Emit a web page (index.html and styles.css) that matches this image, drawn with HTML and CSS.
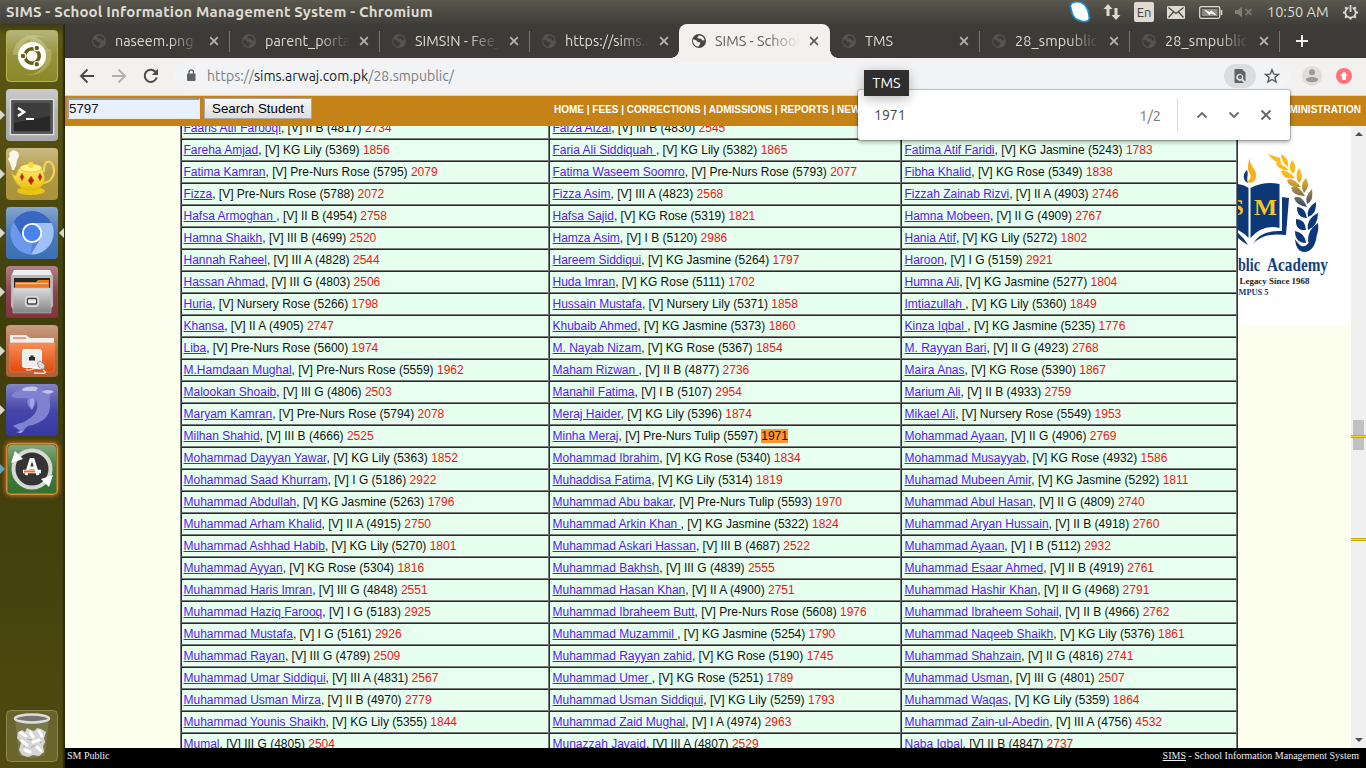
FILE: index.html
```html
<!DOCTYPE html>
<html lang="en">
<head>
<meta charset="utf-8">
<title>SIMS - School Information Management System</title>
<link rel="stylesheet" href="styles.css">
</head>
<body>
<svg class="defs" width="0" height="0">
  <defs>
    <symbol id="globe" viewBox="0 0 14 14"><circle cx="7" cy="7" r="7" fill="currentColor"/><path d="M1.3 5.2 L4.2 6.2 L5.8 8.1 L8.2 8.2 L8.1 10 L6.3 12.7 A5.8 5.8 0 0 1 1.3 5.2Z M7 1.4 L5.2 3.2 L6.4 4.6 L9.2 4.8 L10.2 6.4 L12.6 6.2 A5.8 5.8 0 0 0 7 1.4Z" fill="var(--cut)"/></symbol>
    <symbol id="cross" viewBox="0 0 10 10"><path d="M1.2 1.2L8.8 8.8M8.8 1.2L1.2 8.8" stroke="currentColor" stroke-width="1.7" fill="none"/></symbol>
    <linearGradient id="gloss" x2="0" y2="1"><stop offset="0" stop-color="#fff" stop-opacity=".38"/><stop offset=".5" stop-color="#fff" stop-opacity=".08"/><stop offset="1" stop-color="#fff" stop-opacity="0"/></linearGradient>
    <linearGradient id="metal" x2="0" y2="1"><stop offset="0" stop-color="#dcdcdc"/><stop offset="1" stop-color="#858585"/></linearGradient>
    <linearGradient id="orange" x2="0" y2="1"><stop offset="0" stop-color="#f58e58"/><stop offset="1" stop-color="#e3480c"/></linearGradient>
    <linearGradient id="gold" x2="0" y2="1"><stop offset="0" stop-color="#fff17a"/><stop offset="1" stop-color="#e9bd08"/></linearGradient>
    <linearGradient id="wheat" gradientUnits="userSpaceOnUse" x1="0" y1="176" x2="0" y2="212"><stop offset="0" stop-color="#fbb91c"/><stop offset="1" stop-color="#123c7c"/></linearGradient>
  </defs>
</svg>

<header class="titlebar">
  <span class="window-title">SIMS - School Information Management System - Chromium</span>
  <div class="indicators">
    <svg class="i-skype" width="22" height="22" viewBox="0 0 22 22"><path d="M4 1.500C8 0 13 1 16 4L19 9L20.500 17C20 21 16 21 12 20C7 19 4 16 3 12L1.500 6C1 3 2 2 4 1.500Z" fill="#fff" stroke="#1989c7" stroke-width="1.800"/></svg>
    <svg class="i-net" width="18" height="18" viewBox="0 0 18 18"><path d="M5 1L9.500 6H6.500V13H3.500V6H.5Z M13 17L17.500 12H14.500V5H11.500V12H8.500Z" fill="#dfdbd2"/></svg>
    <span class="lang">En</span>
    <svg class="i-mail" width="18" height="13" viewBox="0 0 18 13"><rect width="18" height="13" rx="1" fill="#dfdbd2"/><path d="M1.500 1.500L9 7.500L16.500 1.500M1.500 11.500L6.500 6M16.500 11.500L11.500 6" stroke="#45433e" stroke-width="1.200" fill="none"/></svg>
    <svg class="i-battery" width="24" height="13" viewBox="0 0 24 13"><rect x=".7" y=".7" width="20" height="11.600" rx="1.500" fill="none" stroke="#dfdbd2" stroke-width="1.300"/><rect x="3" y="3" width="15.500" height="7" fill="#8b8880"/><path d="M22.500 4V9" stroke="#dfdbd2" stroke-width="1.500"/><path d="M5 3.500L11 6L12 4L18 9.500L11.500 7.500L10.500 9.500Z" fill="#fff"/></svg>
    <svg class="i-sound" width="18" height="12" viewBox="0 0 18 12"><path d="M0 4H3L7 .5V11.500L3 8H0Z" fill="#827f77"/><path d="M10.500 3L16.500 9M16.500 3L10.500 9" stroke="#827f77" stroke-width="1.600"/></svg>
    <span class="clock">10:50 AM</span>
    <svg class="i-gear" width="17" height="17" viewBox="0 0 17 17"><g stroke="#dfdbd2" fill="none"><circle cx="8.500" cy="8.500" r="5.200" stroke-width="1.700"/><path d="M8.500 15.500V13.500M1 8.500H3.500M13.500 8.500H16M3.200 3.200L4.800 4.800M12.200 12.200L13.800 13.800M3.200 13.800L4.800 12.200M12.200 4.800L13.800 3.200" stroke-width="2.200"/><path d="M8.500 0V8" stroke="#4a4842" stroke-width="4"/><path d="M8.500 1V8" stroke-width="1.800"/></g></svg>
  </div>
</header>

<div class="desktop">
  <nav class="launcher">
    <div class="slot"><svg viewBox="0 0 52 52"><rect width="52" height="52" rx="4" fill="#8b8829"/><path d="M7 25C7 10 24 0 40 8C25 3 13 14 14 25M45 20C49 38 30 49 17 44C31 48 43 35 39 17M20 5C38 6 47 22 42 35" fill="#bab765" opacity=".6"/><rect x=".5" y=".5" width="51" height="51" rx="4" fill="url(#gloss)" stroke="#b4b160"/><circle cx="26" cy="26" r="14" fill="#fff"/><circle cx="26" cy="26" r="7.200" fill="none" stroke="#666017" stroke-width="3.500"/><g fill="#666017" stroke="#fff" stroke-width="1.200"><circle cx="17" cy="26" r="2.800"/><circle cx="30.800" cy="18" r="2.800"/><circle cx="30.800" cy="34.300" r="2.800"/></g></svg></div>
    <div class="slot running"><svg viewBox="0 0 52 52"><rect width="52" height="52" rx="4" fill="#aaa"/><rect width="52" height="52" rx="4" fill="url(#gloss)"/><rect x="4.500" y="10.500" width="43" height="35" fill="#333" stroke="#ddd" stroke-width="1.500"/><rect x="7" y="13" width="38" height="30" fill="#282828" stroke="#777"/><path d="M8 14H44V27L8 34Z" fill="#555" opacity=".45"/><path d="M12 19L18 23L12 27" stroke="#fff" stroke-width="2.500" fill="none"/><path d="M20 30H28" stroke="#fff" stroke-width="2"/></svg></div>
    <div class="slot running"><svg viewBox="0 0 52 52"><rect width="52" height="52" rx="4" fill="#aa9139"/><rect width="52" height="52" rx="4" fill="url(#gloss)"/><path d="M6 22L4 15L2 11L4 8L3 5L7 2L12 4L13 8L11 12L10 18L8 22Z" fill="#f8f7ec"/><path d="M38 24C37 8 49 12 48 24C47 33 40 35 35 35" fill="none" stroke="#f5d74b" stroke-width="2"/><ellipse cx="25" cy="43" rx="14" ry="4" fill="#e9c515"/><path d="M6 24C8 29 10 29 12 22C16 16 34 16 37 23C42 37 33 42 25 42C14 42 10 35 7 29Z" fill="url(#gold)" stroke="#d8b514" stroke-width=".7"/><ellipse cx="25" cy="20" rx="11" ry="4" fill="#fff38a" stroke="#d8b514" stroke-width=".6"/><circle cx="25" cy="17" r="3" fill="#f6dd3e"/><path d="M25 28L28 32.500L25 37L22 32.500Z M16 25L18 29L16 33L14 29Z M34 25L36 29L34 33L32 29Z" fill="#cc1717" stroke="#a78a20" stroke-width=".5"/></svg></div>
    <div class="slot running focused"><svg viewBox="0 0 52 52"><rect width="52" height="52" rx="4" fill="#3d6fb4"/><rect width="52" height="52" rx="4" fill="url(#gloss)"/><circle cx="26" cy="26" r="21.500" fill="#5583dd"/><path d="M26 26V16H45.500A22 22 0 0 1 25 47.500L34.700 31Z" fill="#a0c1f7"/><path d="M7.500 15A21.500 21.500 0 0 1 45.500 16H26L16 30Z" fill="#3968c2"/><path d="M7.500 15L17 31L26 36L25 47.500A21.500 21.500 0 0 1 7.500 15Z" fill="#6c99eb"/><circle cx="26" cy="26" r="9.200" fill="#4782ee" stroke="#fff" stroke-width="1.800"/></svg></div>
    <div class="slot running"><svg viewBox="0 0 52 52"><rect width="52" height="52" rx="4" fill="#823442"/><rect width="52" height="52" rx="4" fill="url(#gloss)"/><path d="M8 4H44L47 10V40L43 45H8L5 40V10Z" fill="#b9b9b9"/><path d="M8 4H44L46 9H6Z" fill="#eee"/><rect x="8" y="12" width="36" height="10" fill="#292522"/><path d="M9 16H30L32 14H43V22H9Z" fill="#e87a2a"/><path d="M10 17.500H42" stroke="#ffd29b" stroke-width="1.200"/><path d="M7 22H45V47H7Z" fill="url(#metal)" stroke="#bbb" stroke-width=".6"/><rect x="19.500" y="30.500" width="13" height="10" rx="2" fill="#ccc" stroke="#ddd"/><rect x="21.500" y="32.500" width="9" height="5.500" rx="1" fill="#eee" stroke="#444" stroke-width="1.300"/></svg></div>
    <div class="slot running"><svg viewBox="0 0 52 52"><rect width="52" height="52" rx="4" fill="#ac6037"/><rect width="52" height="52" rx="4" fill="url(#gloss)"/><path d="M4 23V10H20L24 13H48V23Z" fill="#eee"/><path d="M7 13H20" stroke="#ef9e77" stroke-width="2"/><path d="M3 18H49L48 44Q48 47 45 47H7Q4 47 4 44Z" fill="url(#orange)" stroke="#ee7c43" stroke-width=".6"/><rect x="16.500" y="24.500" width="19" height="18" rx="2" fill="#eee" stroke="#fff"/><path d="M23 32H24.500V30.500H27.500V32H29V35.500H23Z" fill="#292920"/><path d="M31 38L34 36L39 40L38 44H34Z" fill="#ddd" stroke="#777" stroke-width=".7"/><path d="M35 44C26 41 23 48 20 44M37 45C45 50 32 48 28 48" fill="none" stroke="#eee" stroke-width="1.300"/></svg></div>
    <div class="slot running"><svg viewBox="0 0 52 52"><rect width="52" height="52" rx="4" fill="#3737a2"/><rect width="52" height="52" rx="4" fill="url(#gloss)"/><path d="M6 11C12 5 18 2 27 3C34 3 38 5 40 8C45 5 49 6 48 8C44 10 43 12 44 19C45 31 38 39 22 42C18 44 18 49 14 49C14 45 11 45 7 42C12 39 18 39 21 36C32 30 33 22 30 15C29 20 28 23 26 26C22 23 20 18 22 14C17 14 12 15 6 13Z" fill="#8181d2"/><path d="M16 5C22 2 28 2 32 4L30 7L17 7Z M36 8C40 5 45 6 48 8L42 10Z M10 48L17 47L14 49Z" fill="#dcdcf0" opacity=".75"/><path d="M24 15C23 19 24 22 26 25C28 21 29 18 27 14Z" fill="#a5a5e5"/></svg></div>
    <div class="slot running updater"><svg viewBox="0 0 52 52"><rect x=".5" y=".5" width="51" height="51" rx="4" fill="#33732e" stroke="#e68634" stroke-width="2"/><rect x="2" y="2" width="48" height="46" rx="4" fill="url(#gloss)"/><circle cx="26" cy="26" r="18.500" fill="#353535" stroke="#d8d8d4" stroke-width="4"/><path d="M5 20L9 8L17 16Z M47 32L43 44L35 36Z" fill="#fff"/><path d="M20 32L25 16.500H27L32 32M22 25H30" fill="none" stroke="#fff" stroke-width="3"/><path d="M17 28.500H35" stroke="#fff" stroke-width="3.500"/><path d="M18 28.500H29" stroke="#ef6b25" stroke-width="1.800"/></svg></div>
    <div class="slot trash"><svg viewBox="0 0 52 52"><rect x=".5" y=".5" width="51" height="51" rx="4" fill="#77733b" fill-opacity=".65" stroke="#8a864e"/><path d="M9 9L13 45Q26 51 39 45L43 9Z" fill="#aaa98b" opacity=".3"/><path d="M12 22L16 20L19 22L21 18L25 20L28 21L31 18L35 19L40 22L38 28L39 32L37 36L38 42L33 46L27 45L22 47L16 45L13 40L15 33L11 28Z" fill="#d6d6d4"/><path d="M15 23L20 26M24 22L27 27M33 21L36 26M16 31L21 35M27 32L33 30M31 37L35 41M19 40L24 42" stroke="#fff" stroke-width="3" stroke-linecap="round" fill="none"/><path d="M21 29L26 30M29 35L25 38M17 37L19 36M34 33L36 32" stroke="#aaa" stroke-width="1" fill="none"/><ellipse cx="26" cy="8.500" rx="17" ry="4" fill="#77756b" stroke="#ddd" stroke-width="2.500"/></svg></div>
  </nav>

  <main class="browser">
    <div class="tabs">
      <div class="tab"><svg class="fav"><use href="#globe"/></svg><span class="label">naseem.png</span><svg class="close"><use href="#cross"/></svg></div>
      <div class="tab"><svg class="fav"><use href="#globe"/></svg><span class="label">parent_portal</span><svg class="close"><use href="#cross"/></svg></div>
      <div class="tab"><svg class="fav"><use href="#globe"/></svg><span class="label">SIMS!N - Fee_S</span><svg class="close"><use href="#cross"/></svg></div>
      <div class="tab noline"><svg class="fav"><use href="#globe"/></svg><span class="label">https://sims.a</span><svg class="close"><use href="#cross"/></svg></div>
      <div class="tab active"><svg class="fav"><use href="#globe"/></svg><span class="label">SIMS - School</span><svg class="close"><use href="#cross"/></svg></div>
      <div class="tab"><svg class="fav"><use href="#globe"/></svg><span class="label">TMS</span><svg class="close"><use href="#cross"/></svg></div>
      <div class="tab"><svg class="fav"><use href="#globe"/></svg><span class="label wide">28_smpublic_</span><svg class="close"><use href="#cross"/></svg></div>
      <div class="tab"><svg class="fav"><use href="#globe"/></svg><span class="label wide">28_smpublic_</span><svg class="close"><use href="#cross"/></svg></div>
      <svg class="newtab" width="12" height="12" viewBox="0 0 12 12"><path d="M6 0V12M0 6H12" stroke="#eee" stroke-width="2"/></svg>
    </div>

    <div class="toolbar">
      <svg class="nav-icon" width="16" height="16" viewBox="0 0 16 16"><path d="M15 8H2.500M8.500 1.500L2 8L8.500 14.500" fill="none" stroke="#4a4a4a" stroke-width="1.900"/></svg>
      <svg class="nav-icon" width="16" height="16" viewBox="0 0 16 16"><path d="M1 8H13.500M7.500 1.500L14 8L7.500 14.500" fill="none" stroke="#afafaf" stroke-width="1.900"/></svg>
      <svg class="nav-icon" width="16" height="16" viewBox="0 0 16 16"><path d="M13.700 9.500A6.100 6.100 0 1 1 12.300 3.700L14 5.500" fill="none" stroke="#4a4a4a" stroke-width="2"/><path d="M15 .8V7H8.800Z" fill="#4a4a4a"/></svg>
      <div class="omnibox">
        <svg width="10" height="13" viewBox="0 0 10 13"><rect x="1" y="4.500" width="8.500" height="7.500" rx="1" fill="#5f6368"/><path d="M3 5V3.200A2.200 2.200 0 0 1 7.500 3.200V5" fill="none" stroke="#5f6368" stroke-width="1.300"/></svg>
        <span class="url">https://<b>sims.arwaj.com.pk</b>/28.smpublic/</span>
        <span class="find-pill"><svg width="12" height="14" viewBox="0 0 12 14"><path d="M1.500 0H8L11.500 3.500V12.500L9 10A3.600 3.600 0 1 0 7.500 11.500L10 14H1.500Q.5 14 .5 13V1Q.5 0 1.500 0Z" fill="#5f6368"/><circle cx="6" cy="8" r="2" fill="#5f6368"/></svg></span>
        <svg width="16" height="16" viewBox="0 0 16 16"><path d="M8 1.700L9.800 6.100L14.500 6.400L10.900 9.400L12.100 14L8 11.500L3.900 14L5.100 9.400L1.500 6.400L6.200 6.100Z" fill="none" stroke="#55595e" stroke-width="1.400"/></svg>
      </div>
      <svg class="avatar" width="20" height="20" viewBox="0 0 20 20"><circle cx="10" cy="10" r="10" fill="#dedede"/><circle cx="10" cy="6.200" r="3" fill="#999"/><path d="M4 14C4 10 16 10 16 14C14 17 6 17 4 14Z" fill="#999"/></svg>
      <svg width="16" height="16" viewBox="0 0 16 16"><circle cx="8" cy="8" r="8" fill="#ff7378"/><path d="M8 3.500L12 8H10V12H6V8H4Z" fill="#fff"/></svg>
    </div>

    <div class="site-head">
      <input class="query" type="text" value="5797">
      <button class="search">Search Student</button>
      <nav class="menu"><span>HOME | FEES | CORRECTIONS | ADMISSIONS | REPORTS | NEWS</span><span>ADMINISTRATION</span></nav>
    </div>

    <div class="content">
      <table class="students">
        <colgroup><col class="c1"><col class="c2"><col class="c3"></colgroup>
        <tr><td><a>Faaris Atif Farooqi</a>, [V] II B (4817) <i>2734</i></td><td><a>Faiza Afzal</a>, [V] III B (4830) <i>2545</i></td><td></td></tr>
        <tr><td><a>Fareha Amjad</a>, [V] KG Lily (5369) <i>1856</i></td><td><a>Faria Ali Siddiquah </a>, [V] KG Lily (5382) <i>1865</i></td><td><a>Fatima Atif Faridi</a>, [V] KG Jasmine (5243) <i>1783</i></td></tr>
        <tr><td><a>Fatima Kamran</a>, [V] Pre-Nurs Rose (5795) <i>2079</i></td><td><a>Fatima Waseem Soomro</a>, [V] Pre-Nurs Rose (5793) <i>2077</i></td><td><a>Fibha Khalid</a>, [V] KG Rose (5349) <i>1838</i></td></tr>
        <tr><td><a>Fizza</a>, [V] Pre-Nurs Rose (5788) <i>2072</i></td><td><a>Fizza Asim</a>, [V] III A (4823) <i>2568</i></td><td><a>Fizzah Zainab Rizvi</a>, [V] II A (4903) <i>2746</i></td></tr>
        <tr><td><a>Hafsa Armoghan </a>, [V] II B (4954) <i>2758</i></td><td><a>Hafsa Sajid</a>, [V] KG Rose (5319) <i>1821</i></td><td><a>Hamna Mobeen</a>, [V] II G (4909) <i>2767</i></td></tr>
        <tr><td><a>Hamna Shaikh</a>, [V] III B (4699) <i>2520</i></td><td><a>Hamza Asim</a>, [V] I B (5120) <i>2986</i></td><td><a>Hania Atif</a>, [V] KG Lily (5272) <i>1802</i></td></tr>
        <tr><td><a>Hannah Raheel</a>, [V] III A (4828) <i>2544</i></td><td><a>Hareem Siddiqui</a>, [V] KG Jasmine (5264) <i>1797</i></td><td><a>Haroon</a>, [V] I G (5159) <i>2921</i></td></tr>
        <tr><td><a>Hassan Ahmad</a>, [V] III G (4803) <i>2506</i></td><td><a>Huda Imran</a>, [V] KG Rose (5111) <i>1702</i></td><td><a>Humna Ali</a>, [V] KG Jasmine (5277) <i>1804</i></td></tr>
        <tr><td><a>Huria</a>, [V] Nursery Rose (5266) <i>1798</i></td><td><a>Hussain Mustafa</a>, [V] Nursery Lily (5371) <i>1858</i></td><td><a>Imtiazullah </a>, [V] KG Lily (5360) <i>1849</i></td></tr>
        <tr><td><a>Khansa</a>, [V] II A (4905) <i>2747</i></td><td><a>Khubaib Ahmed</a>, [V] KG Jasmine (5373) <i>1860</i></td><td><a>Kinza Iqbal </a>, [V] KG Jasmine (5235) <i>1776</i></td></tr>
        <tr><td><a>Liba</a>, [V] Pre-Nurs Rose (5600) <i>1974</i></td><td><a>M. Nayab Nizam</a>, [V] KG Rose (5367) <i>1854</i></td><td><a>M. Rayyan Bari</a>, [V] II G (4923) <i>2768</i></td></tr>
        <tr><td><a>M.Hamdaan Mughal</a>, [V] Pre-Nurs Rose (5559) <i>1962</i></td><td><a>Maham Rizwan </a>, [V] II B (4877) <i>2736</i></td><td><a>Maira Anas</a>, [V] KG Rose (5390) <i>1867</i></td></tr>
        <tr><td><a>Malookan Shoaib</a>, [V] III G (4806) <i>2503</i></td><td><a>Manahil Fatima</a>, [V] I B (5107) <i>2954</i></td><td><a>Marium Ali</a>, [V] II B (4933) <i>2759</i></td></tr>
        <tr><td><a>Maryam Kamran</a>, [V] Pre-Nurs Rose (5794) <i>2078</i></td><td><a>Meraj Haider</a>, [V] KG Lily (5396) <i>1874</i></td><td><a>Mikael Ali</a>, [V] Nursery Rose (5549) <i>1953</i></td></tr>
        <tr><td><a>Milhan Shahid</a>, [V] III B (4666) <i>2525</i></td><td><a>Minha Meraj</a>, [V] Pre-Nurs Tulip (5597) <mark>1971</mark></td><td><a>Mohammad Ayaan</a>, [V] II G (4906) <i>2769</i></td></tr>
        <tr><td><a>Mohammad Dayyan Yawar</a>, [V] KG Lily (5363) <i>1852</i></td><td><a>Mohammad Ibrahim</a>, [V] KG Rose (5340) <i>1834</i></td><td><a>Mohammad Musayyab</a>, [V] KG Rose (4932) <i>1586</i></td></tr>
        <tr><td><a>Mohammad Saad Khurram</a>, [V] I G (5186) <i>2922</i></td><td><a>Muhaddisa Fatima</a>, [V] KG Lily (5314) <i>1819</i></td><td><a>Muhamad Mubeen Amir</a>, [V] KG Jasmine (5292) <i>1811</i></td></tr>
        <tr><td><a>Muhammad Abdullah</a>, [V] KG Jasmine (5263) <i>1796</i></td><td><a>Muhammad Abu bakar</a>, [V] Pre-Nurs Tulip (5593) <i>1970</i></td><td><a>Muhammad Abul Hasan</a>, [V] II G (4809) <i>2740</i></td></tr>
        <tr><td><a>Muhammad Arham Khalid</a>, [V] II A (4915) <i>2750</i></td><td><a>Muhammad Arkin Khan </a>, [V] KG Jasmine (5322) <i>1824</i></td><td><a>Muhammad Aryan Hussain</a>, [V] II B (4918) <i>2760</i></td></tr>
        <tr><td><a>Muhammad Ashhad Habib</a>, [V] KG Lily (5270) <i>1801</i></td><td><a>Muhammad Askari Hassan</a>, [V] III B (4687) <i>2522</i></td><td><a>Muhammad Ayaan</a>, [V] I B (5112) <i>2932</i></td></tr>
        <tr><td><a>Muhammad Ayyan</a>, [V] KG Rose (5304) <i>1816</i></td><td><a>Muhammad Bakhsh</a>, [V] III G (4839) <i>2555</i></td><td><a>Muhammad Esaar Ahmed</a>, [V] II B (4919) <i>2761</i></td></tr>
        <tr><td><a>Muhammad Haris Imran</a>, [V] III G (4848) <i>2551</i></td><td><a>Muhammad Hasan Khan</a>, [V] II A (4900) <i>2751</i></td><td><a>Muhammad Hashir Khan</a>, [V] II G (4968) <i>2791</i></td></tr>
        <tr><td><a>Muhammad Haziq Farooq</a>, [V] I G (5183) <i>2925</i></td><td><a>Muhammad Ibraheem Butt</a>, [V] Pre-Nurs Rose (5608) <i>1976</i></td><td><a>Muhammad Ibraheem Sohail</a>, [V] II B (4966) <i>2762</i></td></tr>
        <tr><td><a>Muhammad Mustafa</a>, [V] I G (5161) <i>2926</i></td><td><a>Muhammad Muzammil </a>, [V] KG Jasmine (5254) <i>1790</i></td><td><a>Muhammad Naqeeb Shaikh</a>, [V] KG Lily (5376) <i>1861</i></td></tr>
        <tr><td><a>Muhammad Rayan</a>, [V] III G (4789) <i>2509</i></td><td><a>Muhammad Rayyan zahid</a>, [V] KG Rose (5190) <i>1745</i></td><td><a>Muhammad Shahzain</a>, [V] II G (4816) <i>2741</i></td></tr>
        <tr><td><a>Muhammad Umar Siddiqui</a>, [V] III A (4831) <i>2567</i></td><td><a>Muhammad Umer </a>, [V] KG Rose (5251) <i>1789</i></td><td><a>Muhammad Usman</a>, [V] III G (4801) <i>2507</i></td></tr>
        <tr><td><a>Muhammad Usman Mirza</a>, [V] II B (4970) <i>2779</i></td><td><a>Muhammad Usman Siddiqui</a>, [V] KG Lily (5259) <i>1793</i></td><td><a>Muhammad Waqas</a>, [V] KG Lily (5359) <i>1864</i></td></tr>
        <tr><td><a>Muhammad Younis Shaikh</a>, [V] KG Lily (5355) <i>1844</i></td><td><a>Muhammad Zaid Mughal</a>, [V] I A (4974) <i>2963</i></td><td><a>Muhammad Zain-ul-Abedin</a>, [V] III A (4756) <i>4532</i></td></tr>
        <tr><td><a>Mumal</a>, [V] III G (4805) <i>2504</i></td><td><a>Munazzah Javaid</a>, [V] III A (4807) <i>2529</i></td><td><a>Naba Iqbal</a>, [V] II B (4847) <i>2737</i></td></tr>
      </table>
      <svg class="logo" viewBox="1238 126 113 199">
        <rect x="1238" y="126" width="113" height="199" fill="#fff"/>
        <path d="M1250 158C1249 166 1257 169 1256 176C1256 182 1251 184 1247 182C1252 178 1251 175 1249 172C1247 169 1248 162 1250 158Z" fill="#f8af19"/>
        <path d="M1247 170C1242 174 1243 181 1248 183C1246 178 1249 175 1247 170Z" fill="#143a7c"/>
        <path d="M1238 184Q1245 185 1248.500 188V238Q1244 233 1238 230Z M1250.500 188Q1264 181 1279.500 184V228Q1263 224 1250.500 238Z M1282 197L1289 198L1286 235Q1263 232 1253 244Q1260 230 1282 231Z M1238 233Q1244 238 1248 245Q1244 243 1238 238Z" fill="#0c3877"/>
        <text class="monogram" x="1254" y="215" textLength="23" lengthAdjust="spacingAndGlyphs">M</text>
        <text class="monogram" x="1231" y="215">S</text>
        <g fill="url(#wheat)">
          <path d="M1268 154L1280 158L1281 164Q1274 162 1268 154Z"/><path d="M1276 164Q1276 159 1289 170Q1280 171 1276 164Z"/><path d="M1281 154Q1290 159 1288 167Q1281 162 1281 154Z"/><path d="M1281 171Q1285 168 1295 178Q1283 180 1281 171Z"/><path d="M1292 160Q1298 167 1293 174Q1287 168 1292 160Z"/><path d="M1287 180Q1292 176 1301 187Q1288 188 1287 180Z"/><path d="M1299 168Q1305 177 1299 183Q1294 175 1299 168Z"/><path d="M1291 188Q1297 183 1305 196Q1293 196 1291 188Z"/><path d="M1306 178Q1311 186 1304 193Q1299 185 1306 178Z"/><path d="M1294 198Q1301 193 1307 207Q1297 206 1294 198Z"/><path d="M1312 189Q1314 201 1307 204Q1304 197 1312 189Z"/>
        </g>
        <g fill="#0c3877"><path d="M1297 207Q1305 207 1307 218Q1297 218 1297 207Z M1316 202Q1317 214 1308 217Q1306 208 1316 202Z M1296 219Q1305 219 1306 230Q1295 231 1296 219Z M1318 213Q1318 226 1308 230Q1306 219 1318 213Z M1295 231Q1305 233 1306 243Q1295 243 1295 231Z M1318 223Q1320 239 1308 242Q1307 230 1318 223Z M1295 239Q1303 252 1309 242Q1315 234 1317 234Q1315 251 1305 252Q1296 252 1295 239Z"/></g>
        <text class="academy" x="1238" y="271" textLength="22" lengthAdjust="spacingAndGlyphs">blic</text>
        <text class="academy" x="1267" y="271" textLength="61" lengthAdjust="spacingAndGlyphs">Academy</text>
        <text class="motto" x="1239.500" y="284" textLength="70" lengthAdjust="spacingAndGlyphs">Legacy Since 1968</text>
        <text class="campus" x="1238.500" y="295" textLength="30" lengthAdjust="spacingAndGlyphs">MPUS 5</text>
      </svg>
      <div class="scrollbar">
        <span class="arrow up"></span>
        <span class="thumb"></span>
        <span class="match first"></span>
        <span class="match second"></span>
        <span class="arrow down"></span>
      </div>
    </div>

    <footer class="site-foot"><span>SM Public</span><span><u>SIMS</u> - School Information Management System</span></footer>
  </main>
</div>

<div class="findbar">
  <span class="term">1971</span>
  <span class="count">1/2</span>
  <span class="rule"></span>
  <svg width="12" height="12" viewBox="0 0 12 12"><path d="M1.500 8.500L6 4L10.500 8.500" fill="none" stroke="#6a6a6a" stroke-width="1.800"/></svg>
  <svg width="12" height="12" viewBox="0 0 12 12"><path d="M1.500 3.500L6 8L10.500 3.500" fill="none" stroke="#6a6a6a" stroke-width="1.800"/></svg>
  <svg width="12" height="12" viewBox="0 0 12 12"><path d="M1.500 1.500L10.500 10.500M10.500 1.500L1.500 10.500" fill="none" stroke="#5f6368" stroke-width="1.800"/></svg>
</div>
<div class="tooltip">TMS</div>
</body>
</html>
```

FILE: styles.css
```css
* { box-sizing: border-box; }
body {
  margin: 0;
  width: 1366px;
  height: 768px;
  overflow: hidden;
  display: flex;
  flex-direction: column;
  font-family: Ubuntu, "Noto Sans", sans-serif;
  font-size: 14px;
}
svg { display: block; flex: none; }
.defs { position: absolute; }

.titlebar {
  height: 24px;
  flex: none;
  display: flex;
  justify-content: space-between;
  align-items: center;
  padding: 0 7px 0 6px;
  background: linear-gradient(#5c5a50, #55534a 15%, #403e39);
  color: #dfdbd2;
}
.window-title { font-weight: bold; font-size: 15px; letter-spacing: .18px; line-height: 24px; white-space: nowrap; }
.indicators { display: flex; align-items: center; }
.i-net { margin-left: 12px; }
.lang {
  margin-left: 13px;
  width: 20px;
  height: 20px;
  border-radius: 2px;
  background: #dfdbd2;
  color: #45433e;
  font-size: 13px;
  line-height: 20px;
  text-align: center;
}
.i-mail { margin-left: 13px; }
.i-battery { margin-left: 14px; }
.i-sound { margin-left: 12px; }
.clock { width: 62px; margin-left: 14px; white-space: nowrap; line-height: 24px; font-size: 14.5px; }
.i-gear { margin-left: 13px; }

.desktop { flex: 1; display: flex; min-height: 0; }
.launcher {
  width: 65px;
  flex: none;
  display: flex;
  flex-direction: column;
  gap: 7px;
  padding: 6px 7px 6px 6px;
  background: linear-gradient(90deg, transparent 62px, #28270d 64px), linear-gradient(#3c3a17, #5c5812 12px, #4c4910 190px, #403f0c 280px, #43400d 500px, #514b10 744px);
}
.slot { position: relative; height: 52px; width: 52px; flex: none; }
.slot svg { width: 52px; height: 52px; }
.running::before {
  content: "";
  position: absolute;
  left: -6px;
  top: 21px;
  border: 5px solid transparent;
  border-left-color: #d8d8d0;
  border-right: 0;
}
.focused::after {
  content: "";
  position: absolute;
  right: -6px;
  top: 21px;
  border: 5px solid transparent;
  border-right-color: #d8d8d0;
  border-left: 0;
}
.updater::before { border-left-color: #5ba4b5; }
.updater svg { border-radius: 5px; box-shadow: 0 0 4px 1px #c56c23; }
.trash { margin-top: auto; }

.browser { flex: 1; min-width: 0; display: flex; flex-direction: column; }
.tabs {
  height: 34px;
  flex: none;
  display: flex;
  align-items: center;
  padding-left: 14px;
  background: #3c3b37;
  color: #dfdbd2;
}
.tab {
  --cut: #3c3b37;
  position: relative;
  width: 150px;
  height: 34px;
  flex: none;
  display: flex;
  align-items: center;
  padding-left: 13px;
}
.tab::after {
  content: "";
  position: absolute;
  right: -1px;
  top: 7px;
  width: 1px;
  height: 21px;
  background: #77756f;
}
.tab.noline::after { display: none; }
.fav { width: 14px; height: 14px; color: #555450; }
.label {
  width: 84px;
  margin-left: 9px;
  overflow: hidden;
  white-space: nowrap;
  line-height: 34px;
  font-size: 14.4px;
  -webkit-mask-image: linear-gradient(90deg, #000 54px, transparent 84px);
  mask-image: linear-gradient(90deg, #000 54px, transparent 84px);
}
.label.wide { letter-spacing: .15px; }
.close { width: 10px; height: 10px; margin-left: 10px; color: #b9b6ae; }
.tab.active {
  --cut: #f2f1f0;
  background: #f2f1f0;
  color: #5f5f5f;
  border-radius: 8px 8px 0 0;
  width: 151px;
  margin-right: -1px;
}
.active .fav { color: #454545; }
.active .close { color: #5a5a5a; }
.tab.active::before, .tab.active::after {
  content: "";
  position: absolute;
  top: auto;
  bottom: 0;
  width: 8px;
  height: 8px;
  background: radial-gradient(circle at 0 0, transparent 7.5px, #f2f1f0 8px);
}
.tab.active::before { left: -8px; }
.tab.active::after { right: -8px; transform: scaleX(-1); }
.newtab { margin-left: 17px; }

.toolbar {
  height: 38px;
  flex: none;
  display: flex;
  align-items: center;
  gap: 16px;
  padding: 0 14px 2px 14px;
  background: #f2f1f0;
  border-bottom: 1px solid #d4d4d2;
}
.omnibox {
  flex: 1;
  height: 28px;
  display: flex;
  align-items: center;
  margin-left: -1px;
  padding: 0 10px 0 12px;
  border-radius: 14px;
  background: #f1f3f4;
}
.url { flex: 1; margin-left: 11px; color: #7b7e82; white-space: nowrap; }
.url b { font-weight: normal; color: #202124; }
.find-pill {
  width: 32px;
  height: 24px;
  display: flex;
  align-items: center;
  justify-content: center;
  margin-right: 8px;
  border-radius: 12px;
  background: #dadcdd;
}
.avatar { margin: 0 -2px 0 -4px; }

.site-head {
  height: 30px;
  flex: none;
  display: flex;
  align-items: flex-start;
  padding: 2px 5px 0 2px;
  background: #c48217;
}
.query {
  width: 133px;
  height: 21px;
  padding: 0 0 1px;
  border: 2px solid;
  border-color: #9a9a9a #e8e8e8 #e8e8e8 #9a9a9a;
  border-right-width: 1px;
  border-bottom-width: 1px;
  background: #e8f0fe;
  font: 13.33px "Liberation Sans", sans-serif;
  color: #111;
}
.search {
  width: 108px;
  height: 21px;
  margin-left: 4px;
  padding: 0;
  border: 1px solid #a9a9a9;
  background: linear-gradient(#f6f6f6, #dedede);
  font: 13.33px "Liberation Sans", sans-serif;
  color: #000;
}
.menu {
  flex: 1;
  display: flex;
  justify-content: space-between;
  margin-left: 242px;
  color: #fff;
  font: bold 10px/24px "Liberation Sans", sans-serif;
  white-space: nowrap;
}

.content {
  flex: 1;
  min-height: 0;
  display: flex;
  align-items: flex-start;
  overflow: hidden;
  background: #fcffee;
}
.students {
  width: 1058px;
  flex: none;
  margin: -9px 0 0 115px;
  table-layout: fixed;
  border-collapse: separate;
  border-spacing: 0;
  border-left: 1px solid #777;
  border-right: 1px solid #333;
  font: 12px/20px "Liberation Sans", sans-serif;
  color: #111;
}
.c1 { width: 368px; }
.c2 { width: 352px; }
.c3 { width: 336px; }
.students td {
  height: 22px;
  padding: 0 0 0 2.5px;
  border: 1px solid;
  border-color: #2b2b2b #777 #777 #2b2b2b;
  background: #e6ffee;
  white-space: nowrap;
}
.students td:first-child { padding-left: 1.5px; }
.students a { color: #551aee; text-decoration: underline; white-space: pre-wrap; }
.students i { color: #f01414; font-style: normal; }
.students mark { background: #ff9632; color: #111; }

.logo { width: 113px; height: 199px; }
.monogram { font: bold 23px "Liberation Serif", serif; fill: #f5c52a; }
.academy { font: bold 19px "Liberation Serif", serif; fill: #143f81; }
.motto { font: bold 9px "Liberation Serif", serif; fill: #222; }
.campus { font: bold 8px "Liberation Serif", serif; fill: #143f81; }

.scrollbar {
  position: relative;
  width: 15px;
  height: 622px;
  flex: none;
  background: #f0f0f0;
}
.arrow { position: absolute; left: 4px; border: 4px solid transparent; }
.up { top: 6px; border-top: 0; border-bottom-color: #505050; }
.down { bottom: 6px; border-bottom: 0; border-top-color: #505050; }
.thumb { position: absolute; left: 2px; top: 294px; width: 11px; height: 30px; background: #c1c1c1; }
.match {
  position: absolute;
  left: 0;
  width: 15px;
  height: 3px;
  border: 1px solid #c9ab00;
  border-width: 1px 0;
  background: #ffdf00;
}
.first { top: 309px; }
.second { top: 412px; }

.site-foot {
  height: 20px;
  flex: none;
  display: flex;
  justify-content: space-between;
  padding: 0 7px 0 2px;
  background: #000;
  color: #eee;
  font: 10px/16px "Liberation Serif", serif;
}

.findbar {
  position: absolute;
  left: 858px;
  top: 90px;
  width: 432px;
  height: 50px;
  display: flex;
  align-items: center;
  padding: 0 18px 0 16px;
  background: #fff;
  border-radius: 2px;
  box-shadow: 0 0 0 1px rgba(0,0,0,.18), 0 2px 4px rgba(0,0,0,.35);
  color: #444;
}
.term { flex: 1; }
.count { color: #767676; font-size: 14.5px; }
.rule { width: 1px; height: 34px; margin: 0 1px 0 16px; background: #dcdcdc; }
.findbar svg { margin-left: 20px; }
.findbar .rule + svg { margin-left: 17px; }
.tooltip {
  position: absolute;
  left: 864px;
  top: 70px;
  width: 45px;
  height: 26px;
  background: #2e2e2e;
  color: #fff;
  font-size: 14.5px;
  line-height: 26px;
  text-align: center;
  box-shadow: 0 3px 12px rgba(0,0,0,.28);
}
```
